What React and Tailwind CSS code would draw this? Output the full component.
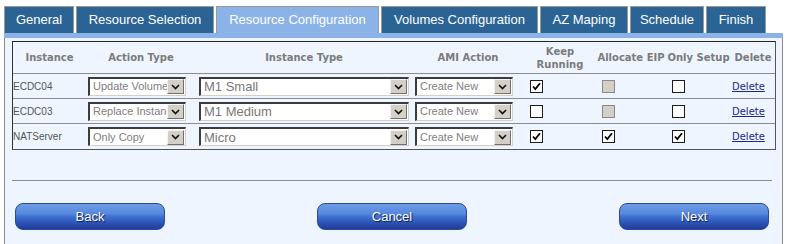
import React from "react";

const tabs = [
  { label: "General", w: "w-[70px]" },
  { label: "Resource Selection", w: "w-[138px]" },
  { label: "Resource Configuration", w: "w-[163px]", active: true },
  { label: "Volumes Configuration", w: "w-[157px]" },
  { label: "AZ Maping", w: "w-[88px]" },
  { label: "Schedule", w: "w-[74px]" },
  { label: "Finish", w: "w-[60px]" },
];

const rows = [
  { name: "ECDC04", action: "Update Volume", type: "M1 Small", keep: true, eip: null, only: false },
  { name: "ECDC03", action: "Replace Instance", type: "M1 Medium", keep: false, eip: null, only: false },
  { name: "NATServer", action: "Only Copy", type: "Micro", keep: true, eip: true, only: true },
];

function Chevron() {
  return (
    <svg width="9" height="6" viewBox="0 0 9 6">
      <path d="M1 1 L4.5 4.5 L8 1" fill="none" stroke="#111" strokeWidth="1.6" />
    </svg>
  );
}

function Select({ w, text, big }) {
  return (
    <div
      className={`${w} h-[19px] flex items-center bg-white border-t-2 border-l-2 border-t-[#3c3c3c] border-l-[#3c3c3c] border-b border-r border-b-[#d4d0c8] border-r-[#d4d0c8]`}
    >
      <span
        className={
          big
            ? "flex-1 min-w-0 overflow-hidden whitespace-nowrap pl-[3px] text-[13px] text-[#777] font-['Liberation_Sans',Arial,sans-serif] leading-none"
            : "flex-1 min-w-0 overflow-hidden whitespace-nowrap pl-[3px] text-[11px] text-[#808080] font-['Liberation_Sans',Arial,sans-serif] leading-none"
        }
      >
        {text}
      </span>
      <span className="w-[17px] h-[15px] mr-px flex items-center justify-center bg-[#d4d0c8] border border-t-[#f4f4f4] border-l-[#f4f4f4] border-b-[#707070] border-r-[#707070]">
        <Chevron />
      </span>
    </div>
  );
}

function Check({ checked, disabled }) {
  if (disabled) {
    return <div className="w-[13px] h-[13px] bg-[#d4d0c8] border border-[#8a8a8a]" />;
  }
  return (
    <div className="w-[13px] h-[13px] bg-white border border-[#1c1c1c] flex items-center justify-center">
      {checked && (
        <svg width="11" height="11" viewBox="0 0 11 11">
          <path d="M2 5.5 L4.3 8 L9 2.2" fill="none" stroke="#000" strokeWidth="1.8" />
        </svg>
      )}
    </div>
  );
}

function GlossButton({ label }) {
  return (
    <button className="w-[150px] h-[27px] rounded-[8px] border border-[#2a4a9a] bg-[linear-gradient(180deg,#6e9be6_0%,#5689dd_38%,#3e6fcf_52%,#2c55b7_75%,#213c94_100%)] text-white text-[13px] font-['Liberation_Sans',Arial,sans-serif] [text-shadow:1px_1px_1px_#101a40] flex items-center justify-center">
      {label}
    </button>
  );
}

export default function App() {
  const grid =
    "grid grid-cols-[73px_110px_216px_112px_72px_70px_65px_44px]";
  const head =
    "flex items-center justify-center text-center font-['DejaVu_Sans',Verdana,sans-serif] font-bold text-[10px] leading-[13px] text-[#7b7b7b]";

  return (
    <div className="w-[789px] h-[244px] overflow-hidden bg-white font-['Liberation_Sans',Arial,sans-serif]">
      <div className="flex gap-[2px] pl-[4px] pt-[6px] h-[33px]">
        {tabs.map((t) => (
          <div
            key={t.label}
            className={`${t.w} h-[27px] flex items-center justify-center border border-b-0 border-[#9a9a9a] text-[13px] text-white ${
              t.active ? "bg-[#8bb3e8]" : "bg-[#2b6494]"
            }`}
          >
            {t.label}
          </div>
        ))}
      </div>
      <div className="ml-[4px] w-[779px] h-[5px] bg-[#8bb3e8]" />
      <div className="ml-[4px] w-[779px] h-[206px] bg-[#eef5ff] border-x border-[#8a8a8a] pt-[3px] pl-[7px]">
        <div className="w-[764px] border border-[#555] border-t-[#222] border-l-[#333]">
          <div className={`${grid} h-[32px] border-b border-[#8c8c8c]`}>
            <div className={head}>Instance</div>
            <div className={head}>Action Type</div>
            <div className={head}>Instance Type</div>
            <div className={head}>AMI Action</div>
            <div className={head}>
              Keep
              <br />
              Running
            </div>
            <div className={head}>Allocate EIP</div>
            <div className={head}>Only Setup</div>
            <div className={head}>Delete</div>
          </div>
          {rows.map((r, i) => (
            <div
              key={r.name}
              className={`${grid} ${i < 2 ? "h-[25px] border-b border-[#8c8c8c]" : "h-[25px]"}`}
            >
              <div className="flex items-center text-[10px] text-[#555]">{r.name}</div>
              <div className="flex items-center pl-[2px]">
                <Select w="w-[98px]" text={r.action} />
              </div>
              <div className="flex items-center pl-[3px]">
                <Select w="w-[210px]" text={r.type} big />
              </div>
              <div className="flex items-center pl-[3px]">
                <Select w="w-[98px]" text="Create New" />
              </div>
              <div className="flex items-center pl-[6px]">
                <Check checked={r.keep} />
              </div>
              <div className="flex items-center pl-[6px]">
                <Check checked={r.eip} disabled={r.eip === null} />
              </div>
              <div className="flex items-center pl-[6px]">
                <Check checked={r.only} />
              </div>
              <div className="flex items-center pl-[1px]">
                <a
                  href="#"
                  className="text-[10px] font-['DejaVu_Sans',Verdana,sans-serif] text-[#1c2888] underline"
                >
                  Delete
                </a>
              </div>
            </div>
          ))}
        </div>
        <div className="mt-[30px] w-[760px] h-px bg-[#8a8a8a]" />
        <div className="mt-[22px] pl-[3px] flex gap-[152px]">
          <GlossButton label="Back" />
          <GlossButton label="Cancel" />
          <GlossButton label="Next" />
        </div>
      </div>
    </div>
  );
}
